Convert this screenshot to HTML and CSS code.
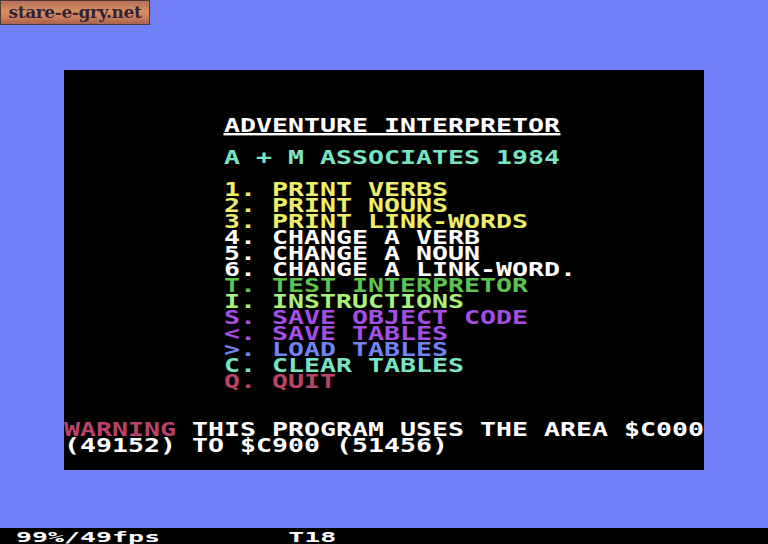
FILE: index.html
```html
<!DOCTYPE html>
<html>
<head>
<meta charset="utf-8">
<link rel="stylesheet" href="styles.css">
</head>
<body>
<div class="app">
  <div class="stage">
    <div class="screen">
<div class="row"> </div>
<div class="row"> </div>
<div class="row"> </div>
<div class="row">          <span class="title">ADVENTURE INTERPRETOR</span></div>
<div class="row"> </div>
<div class="row cyan">          A + M ASSOCIATES 1984</div>
<div class="row"> </div>
<div class="row yellow">          1. PRINT VERBS</div>
<div class="row yellow">          2. PRINT NOUNS</div>
<div class="row yellow">          3. PRINT LINK-WORDS</div>
<div class="row white">          4. CHANGE A VERB</div>
<div class="row white">          5. CHANGE A NOUN</div>
<div class="row white">          6. CHANGE A LINK-WORD.</div>
<div class="row green">          T. TEST INTERPRETOR</div>
<div class="row lgreen">          I. INSTRUCTIONS</div>
<div class="row purple">          S. SAVE OBJECT CODE</div>
<div class="row purple">          &lt;. SAVE TABLES</div>
<div class="row lblue">          &gt;. LOAD TABLES</div>
<div class="row cyan">          C. CLEAR TABLES</div>
<div class="row red">          Q. QUIT</div>
<div class="row"> </div>
<div class="row"> </div>
<div class="row white"><span class="red">WARNING</span> THIS PROGRAM USES THE AREA $C000</div>
<div class="row white">(49152) TO $C900 (51456)</div>
<div class="row"> </div>
    </div>
    <div class="logo">stare-e-gry.net</div>
  </div>
  <div class="status"><span class="stat"> 99%/49fps        T18</span></div>
</div>
</body>
</html>
```

FILE: styles.css
```css
html, body {
  margin: 0;
  padding: 0;
  background: #7080f8;
}
.app {
  width: 768px;
  height: 544px;
  display: flex;
  flex-direction: column;
  overflow: hidden;
}
.stage {
  position: relative;
  height: 528px;
  padding-top: 70px;
  box-sizing: border-box;
  background: #7080f8;
}
.screen {
  margin-left: 64px;
  width: 640px;
  height: 400px;
  background: #000000;
  overflow: hidden;
}
.row {
  height: 16px;
  line-height: 16px;
  font-family: "DejaVu Sans Mono", monospace;
  font-weight: bold;
  font-size: 19px;
  white-space: pre;
  transform: scaleX(1.3986) translateY(-0.6px);
  transform-origin: 0 0;
  color: #ffffff;
}
.title {
  display: inline-block;
  height: 16px;
  line-height: 16px;
  vertical-align: top;
  box-shadow: 0 2px 0 #ffffff;
}
.white { color: #ffffff; }
.cyan { color: #78e4c4; }
.yellow { color: #eeee6a; }
.green { color: #5ec44e; }
.lgreen { color: #aaf07a; }
.purple { color: #a44ee4; }
.lblue { color: #7282f2; }
.red { color: #b8426c; }
.logo {
  position: absolute;
  left: 0;
  top: 0;
  width: 148px;
  height: 23px;
  border: 1px solid #4a3a3a;
  background: linear-gradient(180deg, #b87058 0%, #d8905e 45%, #c87a56 75%, #a86250 100%);
  color: #34223a;
  font-family: "DejaVu Serif", serif;
  font-weight: bold;
  font-size: 17px;
  line-height: 23px;
  text-align: center;
  letter-spacing: -0.4px;
  overflow: hidden;
  white-space: nowrap;
}
.status {
  height: 16px;
  background: #000000;
  overflow: hidden;
}
.stat {
  display: block;
  font-family: "DejaVu Sans Mono", monospace;
  font-weight: bold;
  font-size: 14px;
  line-height: 16px;
  height: 16px;
  white-space: pre;
  color: #ffffff;
  transform: scaleX(1.9) translateY(1px);
  transform-origin: 0 0;
}
```
